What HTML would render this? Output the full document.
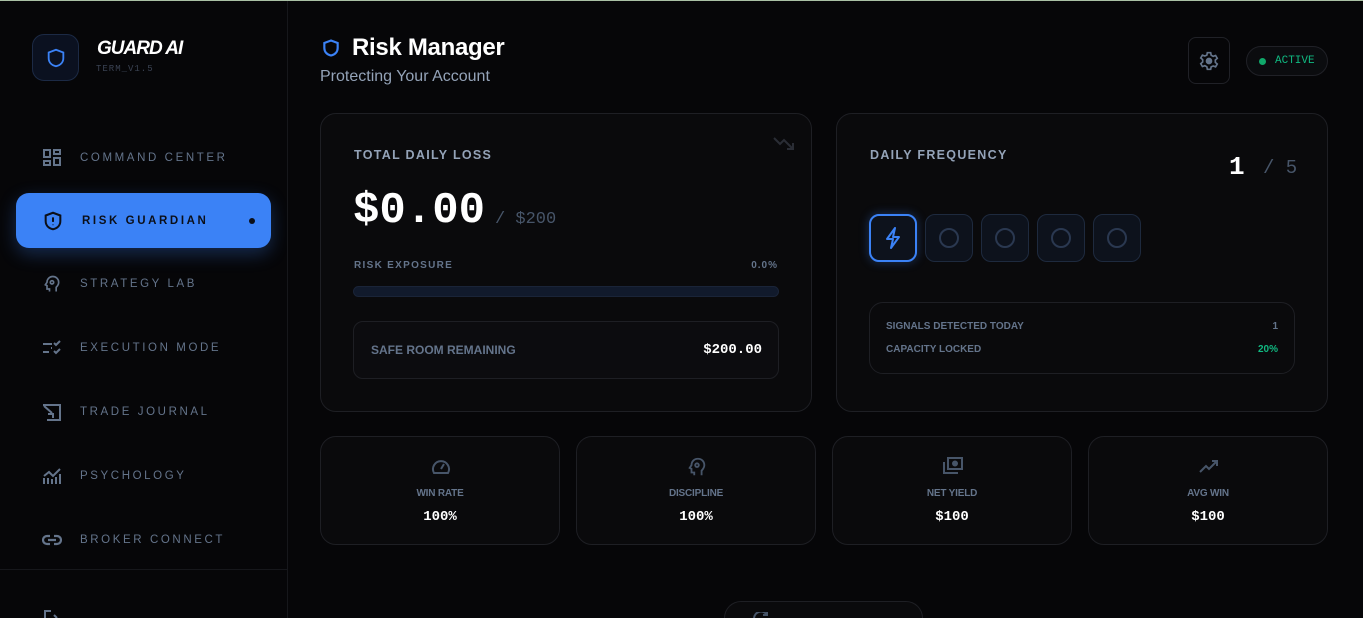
<!DOCTYPE html>
<html><head><meta charset="utf-8"><style>
*{box-sizing:border-box;margin:0;padding:0}
html{width:1363px;height:618px;overflow:hidden}
body{width:1363px;height:618px;overflow:hidden;background:#060608;font-family:"Liberation Sans",sans-serif;position:relative;color:#fff}
.topline{position:absolute;left:0;top:0;width:1363px;height:1px;background:#a9c0a4}
.side{position:absolute;left:0;top:1px;width:288px;height:617px;border-right:1px solid #16171b;background:#060608;overflow:hidden}
.logo{position:absolute;left:32px;top:33px;width:47px;height:47px;border:1px solid #1c2a45;border-radius:12px;background:#0b1120;display:flex;align-items:center;justify-content:center}
.brand{position:absolute;left:97px;top:37px;font-weight:bold;font-style:italic;font-size:19px;letter-spacing:-1px}
.ver{position:absolute;left:96px;top:63px;font-family:"Liberation Mono",monospace;font-size:9px;color:#3a4252;letter-spacing:1px}
.nav{position:absolute;left:42px;font-size:11.5px;letter-spacing:2.6px;color:#64748b;display:flex;align-items:center}
.nav svg{margin-right:18px}
.active{position:absolute;left:16px;top:192px;width:255px;height:55px;border-radius:13px;background:#3b82f6;box-shadow:0 6px 18px rgba(59,130,246,.3)}
.divider{position:absolute;left:0;top:568px;width:287px;height:1px;background:#16171b}
.card{position:absolute;border:1px solid #1e1f24;border-radius:16px;background:#0a0a0c}
.lbl{font-weight:bold;font-size:12.5px;letter-spacing:1.3px;color:#94a3b8;position:absolute}
.mono{font-family:"Liberation Mono",monospace;font-weight:bold}
.stat{top:436px;width:240px;height:109px;text-align:center}
.stat .t{position:absolute;left:0;right:0;top:51px;font-size:10px;font-weight:bold;color:#64748b;letter-spacing:-0.2px}
.stat .v{position:absolute;left:0;right:0;top:72px;font-size:14px;font-family:"Liberation Mono",monospace;font-weight:bold}
.stat svg{position:absolute;left:109px;top:19px}
.sq{position:absolute;top:214px;width:48px;height:48px;border-radius:10px;border:1px solid #1e2a3e;background:#0d121c;display:flex;align-items:center;justify-content:center}
</style></head><body>
<div class="topline"></div>
<div class="side">
 <div class="logo"><svg width="22" height="24" viewBox="0 0 24 24" fill="none" stroke="#3b82f6" stroke-width="2"><path d="M12 3l8 3v6c0 5-3.5 8-8 9-4.5-1-8-4-8-9V6z"/></svg></div>
 <div class="brand">GUARD AI</div>
 <div class="ver">TERM_V1.5</div>
 <div class="nav" style="top:147px"><svg width="20" height="20" viewBox="0 0 20 20" fill="none" stroke="#64748b" stroke-width="2"><rect x="2" y="2" width="6" height="7"/><rect x="12" y="2" width="6" height="4"/><rect x="2" y="13" width="6" height="4"/><rect x="12" y="10" width="6" height="7"/></svg>COMMAND CENTER</div>
 <div class="active"></div>
 <div class="nav" style="top:209px;color:#0b0f19;font-weight:bold"><svg width="22" height="22" viewBox="0 0 24 24" fill="none" stroke="#0b0f19" stroke-width="2.2"><path d="M12 3l8 3v6c0 5-3.5 8-8 9-4.5-1-8-4-8-9V6z"/><path d="M12 8v5M12 16v.5"/></svg>RISK GUARDIAN</div>
 <div style="position:absolute;left:249px;top:217px;width:6px;height:6px;border-radius:50%;background:#0b0f19"></div>
 <div class="nav" style="top:273px"><svg width="20" height="20" viewBox="0 0 24 24" fill="none" stroke="#64748b" stroke-width="2"><path d="M9 21v-3H6v-4l-2-1 2-3c0-4 3-7 7-7s7 3 7 7c0 3-2 5-3 6v5"/><circle cx="12" cy="10" r="2"/></svg>STRATEGY LAB</div>
 <div class="nav" style="top:337px"><svg width="20" height="20" viewBox="0 0 20 20" fill="none" stroke="#64748b" stroke-width="2"><path d="M1 6h9M1 14h6M12 5l2 2 4-4M12 13l2 2 4-4M10 10h-1"/></svg>EXECUTION MODE</div>
 <div class="nav" style="top:401px"><svg width="20" height="20" viewBox="0 0 20 20" fill="none" stroke="#64748b" stroke-width="2"><path d="M1 3h17v15H5M2 4l8 7M6 12h5v4"/></svg>TRADE JOURNAL</div>
 <div class="nav" style="top:465px"><svg width="20" height="20" viewBox="0 0 20 20" fill="none" stroke="#64748b" stroke-width="2"><path d="M2 18v-6M6 18v-6M10 18v-5M14 18v-7M18 18v-10M2 10l5-4 4 4 7-7"/></svg>PSYCHOLOGY</div>
 <div class="nav" style="top:529px"><svg width="20" height="20" viewBox="0 0 20 20" fill="none" stroke="#64748b" stroke-width="2.2"><path d="M8 6H5a4 4 0 000 8h3M12 6h3a4 4 0 010 8h-3M6 10h8"/></svg>BROKER CONNECT</div>
 <div class="divider"></div>
 <svg style="position:absolute;left:42px;top:608px" width="20" height="12" viewBox="0 0 20 12" fill="none" stroke="#64748b" stroke-width="2"><path d="M9 2H3v10M12 6l3 3"/></svg>
</div>

<svg style="position:absolute;left:321px;top:37px" width="20" height="22" viewBox="0 0 24 24" fill="none" stroke="#3b82f6" stroke-width="2.6"><path d="M12 3l8 3v6c0 5-3.5 8-8 9-4.5-1-8-4-8-9V6z"/></svg>
<div style="position:absolute;left:352px;top:34px;font-size:24px;font-weight:bold;letter-spacing:-0.3px">Risk Manager</div>
<div style="position:absolute;left:320px;top:68px;font-size:16px;color:#94a3b8">Protecting Your Account</div>

<div style="position:absolute;left:1188px;top:37px;width:42px;height:47px;border:1px solid #202127;border-radius:8px;display:flex;align-items:center;justify-content:center"><svg width="20" height="20" viewBox="0 0 24 24" fill="none" stroke="#64748b" stroke-width="2"><path d="M10 2h4l.6 3 2.4 1.4 2.9-1 2 3.4-2.3 2v2.8l2.3 2-2 3.4-2.9-1L14.6 19 14 22h-4l-.6-3-2.4-1.4-2.9 1-2-3.4 2.3-2v-2.8l-2.3-2 2-3.4 2.9 1L9.4 5z"/><circle cx="12" cy="12" r="3" fill="#64748b"/></svg></div>
<div style="position:absolute;left:1246px;top:46px;width:82px;height:30px;border:1px solid #202127;border-radius:15px;background:#0b0c0f;display:flex;align-items:center;padding-left:12px"><span style="width:7px;height:7px;border-radius:50%;background:#10a86a;margin-right:9px"></span><span class="mono" style="font-weight:normal;font-size:11px;color:#10b981">ACTIVE</span></div>

<div class="card" style="left:320px;top:113px;width:492px;height:299px">
 <div class="lbl" style="left:33px;top:34px">TOTAL DAILY LOSS</div>
 <svg style="position:absolute;left:452px;top:22px" width="22" height="14" viewBox="0 0 22 14" fill="none" stroke="#2a2d35" stroke-width="2"><path d="M1 2l6 6 4-4 9 9M14 13h6V7"/></svg>
 <div class="mono" style="position:absolute;left:32px;top:72px;font-size:44px;letter-spacing:0">$0.00</div>
 <div class="mono" style="position:absolute;left:174px;top:96px;font-size:17px;font-weight:normal;color:#475569">/ $200</div>
 <div class="lbl" style="left:33px;top:146px;font-size:10px;color:#64748b">RISK EXPOSURE</div>
 <div class="lbl" style="right:33px;top:146px;font-size:10px;color:#64748b;letter-spacing:1px">0.0%</div>
 <div style="position:absolute;left:32px;top:172px;width:426px;height:11px;border-radius:6px;background:#111a2c;border:1px solid #1a2438"></div>
 <div style="position:absolute;left:32px;top:207px;width:426px;height:58px;border:1px solid #1e1f24;border-radius:10px;background:#0c0c0f">
  <div style="position:absolute;left:17px;top:21px;font-size:12px;font-weight:bold;color:#64748b">SAFE ROOM REMAINING</div>
  <div class="mono" style="position:absolute;right:16px;top:20px;font-size:14px">$200.00</div>
 </div>
</div>

<div class="card" style="left:836px;top:113px;width:492px;height:299px">
 <div class="lbl" style="left:33px;top:34px">DAILY FREQUENCY</div>
 <div class="mono" style="position:absolute;left:392px;top:38px;font-size:26px">1</div>
 <div class="mono" style="position:absolute;left:426px;top:43px;font-size:19px;color:#475569;font-weight:normal">/ 5</div>
</div>
<div class="sq" style="left:869px;border:2px solid #3b82f6;box-shadow:0 0 10px rgba(59,130,246,.35)"><svg width="18" height="22" viewBox="0 0 18 22" fill="none" stroke="#3b82f6" stroke-width="2" stroke-linejoin="round"><path d="M11 1L3 12h6l-2 9 8-11H9z"/></svg></div>
<div class="sq" style="left:925px"><svg width="20" height="20"><circle cx="10" cy="10" r="9" fill="none" stroke="#2a3850" stroke-width="2"/></svg></div>
<div class="sq" style="left:981px"><svg width="20" height="20"><circle cx="10" cy="10" r="9" fill="none" stroke="#2a3850" stroke-width="2"/></svg></div>
<div class="sq" style="left:1037px"><svg width="20" height="20"><circle cx="10" cy="10" r="9" fill="none" stroke="#2a3850" stroke-width="2"/></svg></div>
<div class="sq" style="left:1093px"><svg width="20" height="20"><circle cx="10" cy="10" r="9" fill="none" stroke="#2a3850" stroke-width="2"/></svg></div>
<div style="position:absolute;left:869px;top:302px;width:426px;height:72px;border:1px solid #1e1f24;border-radius:14px">
 <div style="position:absolute;left:16px;top:18px;font-size:10px;font-weight:bold;color:#64748b">SIGNALS DETECTED TODAY</div>
 <div style="position:absolute;right:16px;top:18px;font-size:10px;font-weight:bold;color:#64748b">1</div>
 <div style="position:absolute;left:16px;top:41px;font-size:10px;font-weight:bold;color:#64748b">CAPACITY LOCKED</div>
 <div style="position:absolute;right:16px;top:41px;font-size:10px;font-weight:bold;color:#10b981">20%</div>
</div>

<div class="card stat" style="left:320px"><svg width="22" height="20" viewBox="0 0 22 20" fill="none" stroke="#475569" stroke-width="2"><path d="M4 17a8 8 0 1114 0zM11 13l3-5"/></svg><div class="t">WIN RATE</div><div class="v">100%</div></div>
<div class="card stat" style="left:576px"><svg width="22" height="22" viewBox="0 0 24 24" fill="none" stroke="#475569" stroke-width="2"><path d="M9 21v-3H6v-4l-2-1 2-3c0-4 3-7 7-7s7 3 7 7c0 3-2 5-3 6v5"/><circle cx="12" cy="10" r="2"/></svg><div class="t">DISCIPLINE</div><div class="v">100%</div></div>
<div class="card stat" style="left:832px"><svg width="22" height="20" viewBox="0 0 22 20" fill="none" stroke="#475569" stroke-width="2"><rect x="6" y="2" width="14" height="11"/><circle cx="13" cy="7.5" r="2" fill="#475569"/><path d="M2 6v11h14"/></svg><div class="t">NET YIELD</div><div class="v">$100</div></div>
<div class="card stat" style="left:1088px"><svg width="22" height="20" viewBox="0 0 22 20" fill="none" stroke="#475569" stroke-width="2"><path d="M2 16l6-6 3 3 8-8M14 5h5v5"/></svg><div class="t">AVG WIN</div><div class="v">$100</div></div>

<div style="position:absolute;left:724px;top:601px;width:199px;height:17px;border:1px solid #1e1f24;border-bottom:none;border-radius:17px 17px 0 0;background:#0a0a0c"></div>
<svg style="position:absolute;left:752px;top:612px" width="18" height="6" viewBox="0 0 18 6" fill="none" stroke="#475569" stroke-width="2"><path d="M2 6a7 7 0 0113-3M15 0v3h-4"/></svg>
</body></html>
